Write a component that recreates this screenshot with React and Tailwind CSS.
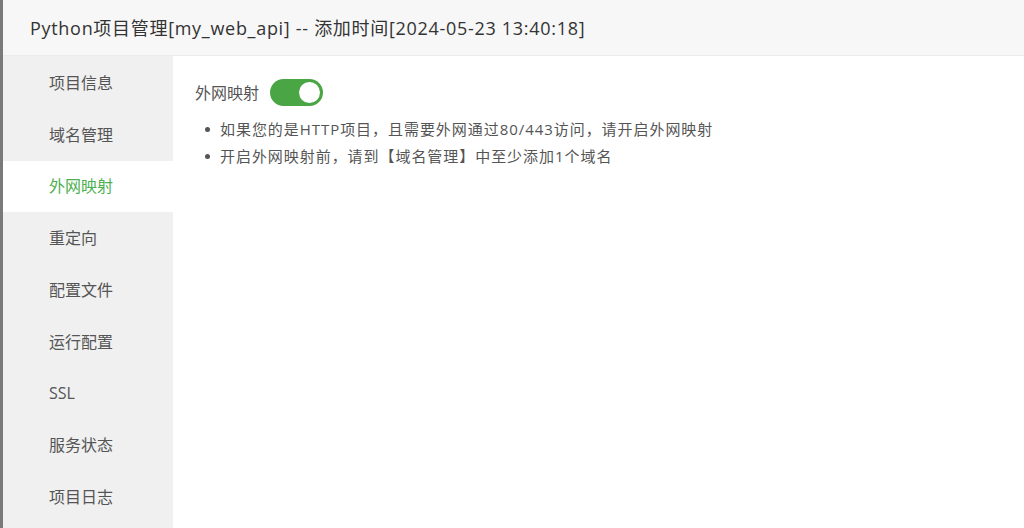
import React, { useState } from 'react';

const menu = ['项目信息', '域名管理', '外网映射', '重定向', '配置文件', '运行配置', 'SSL', '服务状态', '项目日志'];

const font = { fontFamily: '"Open Sans", "Noto Sans CJK SC", sans-serif' };

const App = () => {
  const [active, setActive] = useState('外网映射');
  const [enabled, setEnabled] = useState(true);

  return (
    <div className="flex h-[528px] w-[1024px] overflow-hidden bg-white" style={font}>
      {/* left edge of the window */}
      <div className="w-[3px] shrink-0 bg-[#7a7a7a]"></div>

      <div className="flex flex-1 flex-col">
        <div className="flex h-[56px] shrink-0 items-center border-b border-[#ececec] bg-[#f7f7f7] pl-[27px] pt-[2px] text-[18px] tracking-[0.7px] text-[#333]">
          Python项目管理[my_web_api] -- 添加时间[2024-05-23 13:40:18]
        </div>

        <div className="flex flex-1">
          {/* Sidebar */}
          <div className="w-[170px] shrink-0 pt-[1px] bg-[#f0f0f0]">
            {menu.map((item) => (
              <div
                key={item}
                onClick={() => setActive(item)}
                className={`flex h-[51.75px] cursor-pointer items-center pl-[46px] text-[16px] ${
                  active === item ? 'bg-white text-[#4caf50]' : 'text-[#555]'
                }`}
              >
                {item}
              </div>
            ))}
          </div>

          {/* Content */}
          <div className="flex-1 pl-[22px] pt-[23px]">
            <div className="flex items-center gap-[11px]">
              <span className="text-[16px] text-[#555]">外网映射</span>
              <button
                onClick={() => setEnabled(!enabled)}
                className={`flex h-[27px] w-[53px] items-center rounded-full p-[3px] ${
                  enabled ? 'justify-end bg-[#4aa544]' : 'justify-start bg-[#ddd]'
                }`}
              >
                <span className="h-[21px] w-[21px] rounded-full bg-white"></span>
              </button>
            </div>

            <ul className="mt-[13px] space-y-[6px] pl-[10px] text-[15px] leading-[21px] tracking-[0.95px] text-[#555]">
              <li className="flex items-center gap-[10px]">
                <span className="h-[5px] w-[5px] rounded-full bg-[#555]"></span>
                如果您的是HTTP项目，且需要外网通过80/443访问，请开启外网映射
              </li>
              <li className="flex items-center gap-[10px]">
                <span className="h-[5px] w-[5px] rounded-full bg-[#555]"></span>
                开启外网映射前，请到【域名管理】中至少添加1个域名
              </li>
            </ul>
          </div>
        </div>
      </div>
    </div>
  );
};

export default App;
